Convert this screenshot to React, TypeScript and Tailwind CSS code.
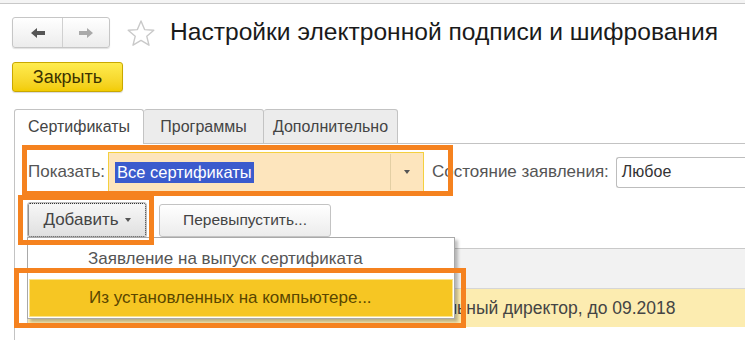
import React from 'react';

const Orange = ({ className }: { className: string }) => (
    <div className={`absolute border-[5px] border-[#f5821f] pointer-events-none ${className}`} />
);

const Star = () => (
    <svg width="30" height="28" viewBox="0 0 30 28" fill="none">
        <path
            d="M15 2 L18.6 10.6 L27.8 11.3 L20.8 17.3 L23 26.2 L15 21.4 L7 26.2 L9.2 17.3 L2.2 11.3 L11.4 10.6 Z"
            stroke="#c9c9c9"
            strokeWidth="1.4"
            strokeLinejoin="round"
        />
    </svg>
);

const Arrow = ({ dir, color }: { dir: 'left' | 'right'; color: string }) => (
    <svg width="16" height="12" viewBox="0 0 16 12" style={{ transform: dir === 'right' ? 'scaleX(-1)' : undefined }}>
        <path d="M1 6 L7 1 L7 4 L15 4 L15 8 L7 8 L7 11 Z" fill={color} />
    </svg>
);

const App = () => {
    return (
        <div className="relative w-[745px] h-[340px] overflow-hidden bg-white font-['Liberation_Sans',Arial,sans-serif] text-[#333]">
            {/* window top edge */}
            <div className="h-[4px] border-b border-[#c8c8c8] bg-[#f4f4f4]" />

            {/* header */}
            <div className="flex items-center pl-[12px] pt-[11px] h-[46px]">
                <div className="flex h-[31px] w-[98px] rounded-[3px] border border-[#c6c6c6] bg-gradient-to-b from-white to-[#ececec] shadow-[0_1px_1px_rgba(0,0,0,0.12)]">
                    <div className="flex w-[50px] items-center justify-center border-r border-[#d0d0d0]">
                        <Arrow dir="left" color="#555" />
                    </div>
                    <div className="flex flex-1 items-center justify-center">
                        <Arrow dir="right" color="#a9a9a9" />
                    </div>
                </div>
                <div className="ml-[16px] mt-[1px]">
                    <Star />
                </div>
                <div className="ml-[14px] text-[24.6px] leading-none text-[#1a1a1a] whitespace-nowrap">
                    Настройки электронной подписи и шифрования
                </div>
            </div>

            {/* close button */}
            <div className="pl-[12px] mt-[12px]">
                <button className="flex h-[30px] w-[111px] items-center justify-center rounded-[3px] border border-[#c9a800] bg-gradient-to-b from-[#ffec4d] to-[#f2cc00] text-[18px] text-[#3c3300] shadow-[0_1px_1px_rgba(0,0,0,0.15)]">
                    Закрыть
                </button>
            </div>

            {/* tabs */}
            <div className="flex pl-[14px] mt-[17px] h-[35px] text-[16px]">
                <div className="flex w-[130px] items-center justify-center rounded-t-[3px] border border-b-0 border-[#c3c3c3] bg-white text-[#444]">
                    Сертификаты
                </div>
                <div className="flex w-[120px] items-center justify-center rounded-t-[3px] border border-l-0 border-[#c3c3c3] bg-[#ececec] text-[#444]">
                    Программы
                </div>
                <div className="flex w-[134px] items-center justify-center rounded-t-[3px] border border-l-0 border-[#c3c3c3] bg-[#ececec] text-[#444]">
                    Дополнительно
                </div>
                <div className="flex-1 border-b border-[#c3c3c3]" />
            </div>

            {/* panel */}
            <div className="ml-[14px] border-l border-[#c3c3c3] h-[200px]">
                <div className="flex items-center h-[47px] pt-[9px] pl-[13px] text-[17px]">
                    <span className="w-[80px] text-[#555] whitespace-nowrap">Показать:</span>
                    <div className="flex h-[40px] w-[316px] items-center border border-[#f4d03f] bg-[#fde5bd]">
                        <div className="flex flex-1 items-center pl-[6px]">
                            <span className="bg-[#3b5bcd] px-[2px] py-[2px] text-[16.5px] leading-[17px] text-white">Все сертификаты</span>
                        </div>
                        <div className="flex h-[36px] w-[33px] items-center justify-center border-l border-[#e3cfa4]">
                            <div className="h-0 w-0 border-x-[3px] border-t-[4px] border-x-transparent border-t-[#555]" />
                        </div>
                    </div>
                    <span className="ml-[8px] text-[#555] whitespace-nowrap">Состояние заявления:</span>
                    <div className="ml-[7px] flex h-[31px] flex-1 items-center rounded-l-[3px] border border-r-0 border-[#bdbdbd] pl-[5px] text-[16px] text-[#333]">
                        Любое
                    </div>
                </div>

                <div className="flex items-center gap-[13px] pl-[13px] mt-[12px]">
                    <button className="flex h-[34px] w-[118px] items-center justify-center gap-[6px] rounded-[2px] border border-dotted border-[#333] bg-gradient-to-b from-[#f7f7f7] to-[#e0e0e0] text-[17px] text-[#444] outline outline-1 outline-[#bdbdbd]">
                        Добавить
                        <span className="h-0 w-0 border-x-[3px] border-t-[4px] border-x-transparent border-t-[#555]" />
                    </button>
                    <button className="flex h-[33px] w-[172px] items-center justify-center rounded-[3px] border border-[#c3c3c3] bg-gradient-to-b from-white to-[#ececec] text-[15.5px] text-[#444]">
                        Перевыпустить...
                    </button>
                </div>

                {/* list */}
                <div className="ml-[12px] mt-[11px] border-l border-t border-[#c9c9c9]">
                    <div className="h-[40px] border-b border-[#d6d6d6] bg-[#f2f2f2]" />
                    <div className="flex h-[38px] items-center bg-[#fcecb0] pl-[362px] text-[17.5px] text-[#444] whitespace-nowrap">
                        Генеральный директор, до 09.2018
                    </div>
                </div>
            </div>

            {/* dropdown menu */}
            <div className="absolute left-[27px] top-[237px] w-[428px] border border-[#a9a9a9] bg-white shadow-[3px_3px_3px_rgba(0,0,0,0.25)] text-[17px]">
                <div className="flex h-[41px] items-center pl-[60px] text-[#555]">Заявление на выпуск сертификата</div>
                <div className="flex h-[38px] items-center border border-[#fbe58a] bg-[#f6c623] pl-[59px] text-[#5a4600] mx-[1px] mb-[1px]">
                    Из установленных на компьютере...
                </div>
            </div>

            {/* annotation frames */}
            <Orange className="left-[22px] top-[145px] w-[431px] h-[51px]" />
            <Orange className="left-[18px] top-[195px] w-[136px] h-[50px]" />
            <Orange className="left-[14px] top-[268px] w-[452px] h-[60px]" />
        </div>
    );
};

export default App;
